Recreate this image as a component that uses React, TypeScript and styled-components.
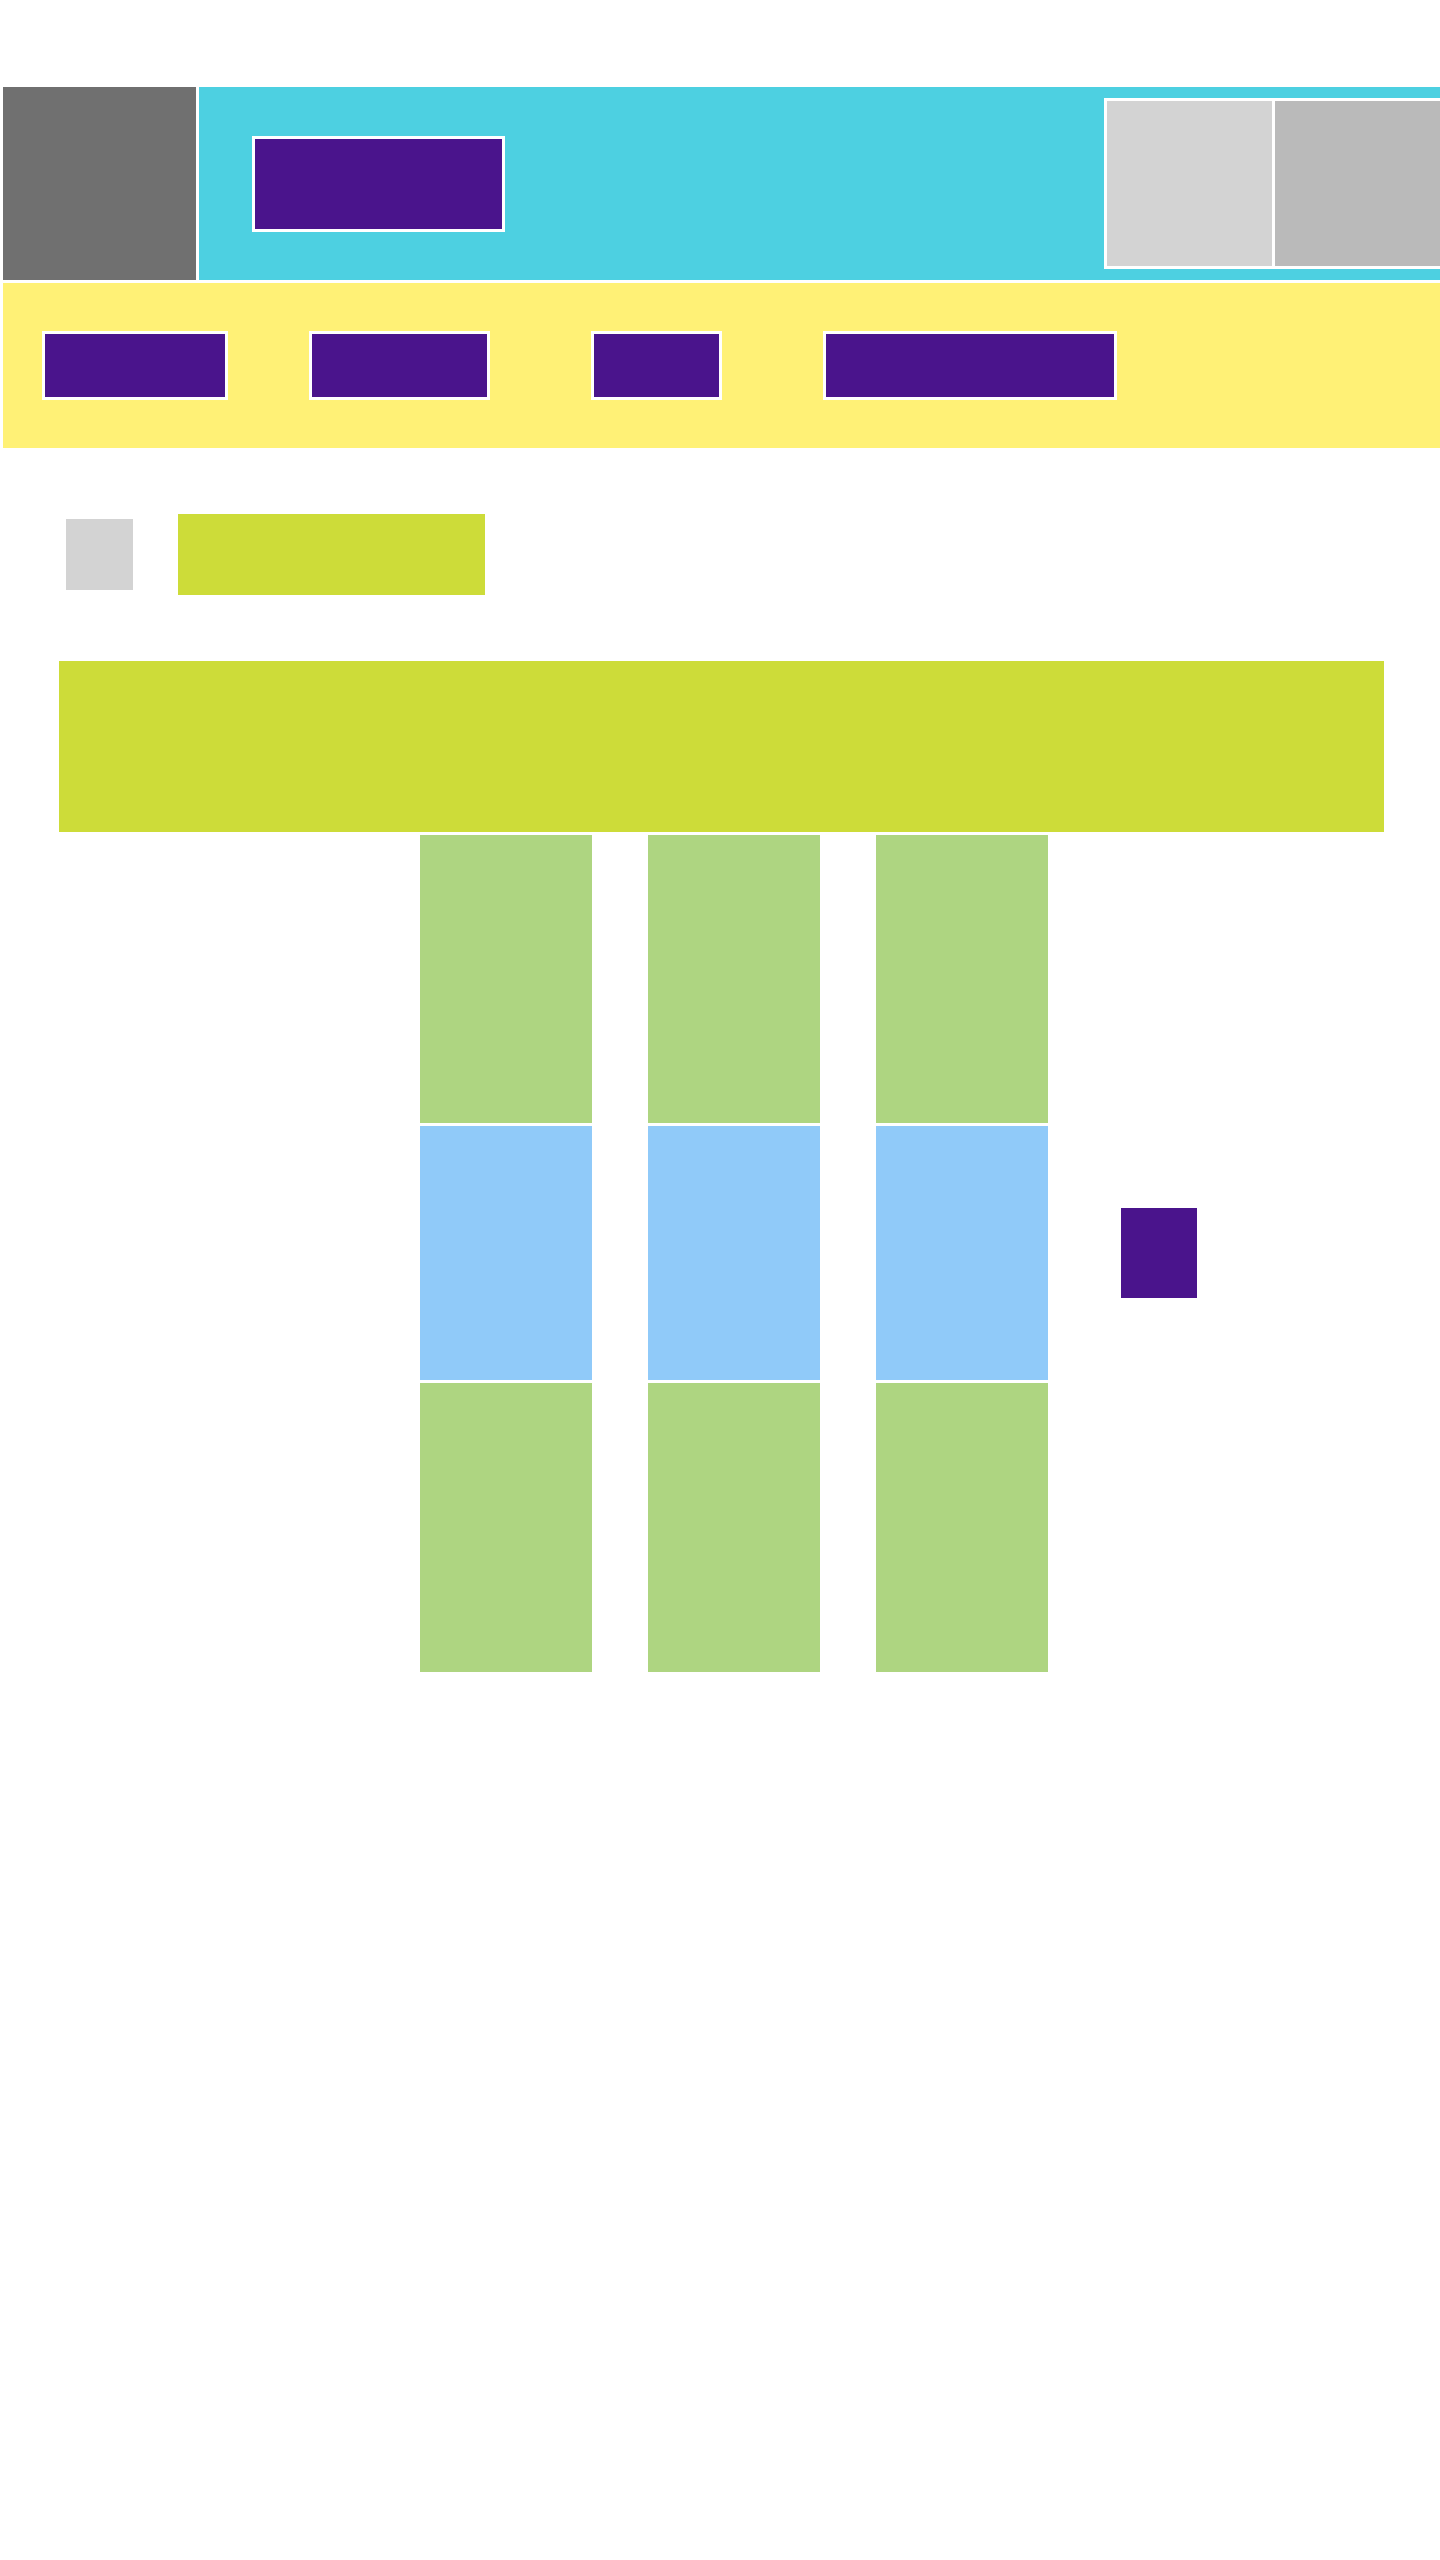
import React from "react";
import styled, { createGlobalStyle } from "styled-components";

const Global = createGlobalStyle`
  html, body {
    margin: 0;
    padding: 0;
    background: #ffffff;
    overflow-x: hidden;
    font-family: "Liberation Sans", Arial, sans-serif;
  }
  *, *::before, *::after { box-sizing: border-box; }
`;

const Page = styled.div`
  width: 1440px;
  margin-left: 3px;
  padding-top: 87px;
  min-height: 2560px;
  display: flex;
  flex-direction: column;
`;

const Header = styled.header`
  display: flex;
  gap: 3px;
  height: 193px;
`;

const Logo = styled.div`
  width: 193px;
  flex: none;
  background: #707070;
`;

const HeaderBar = styled.div`
  flex: 1;
  background: #4dd0e1;
  display: flex;
  align-items: center;
  justify-content: space-between;
  padding-left: 53px;
`;

const PurpleButton = styled.div<{ $w: number; $h: number }>`
  width: ${(p) => p.$w}px;
  height: ${(p) => p.$h}px;
  flex: none;
  background: #4a148c;
  border: 3px solid #ffffff;
`;

const ThumbGroup = styled.div`
  display: flex;
  gap: 3px;
  padding: 3px;
  background: #ffffff;
`;

const Thumb = styled.div<{ $c: string }>`
  width: 165px;
  height: 165px;
  background: ${(p) => p.$c};
`;

const Nav = styled.nav`
  margin-top: 3px;
  height: 165px;
  background: #fff176;
  display: flex;
  align-items: center;
  padding-left: 39px;
`;

const NavItem = styled(PurpleButton)<{ $mr: number }>`
  margin-right: ${(p) => p.$mr}px;
`;

const TitleRow = styled.div`
  margin-top: 66px;
  margin-left: 63px;
  display: flex;
  align-items: center;
  gap: 45px;
`;

const Avatar = styled.div`
  width: 67px;
  height: 71px;
  background: #d3d3d3;
`;

const Title = styled.div`
  width: 307px;
  height: 81px;
  background: #cddc39;
`;

const Banner = styled.div`
  margin-top: 66px;
  margin-left: 56px;
  width: 1325px;
  height: 171px;
  background: #cddc39;
`;

const Grid = styled.div`
  margin-top: 3px;
  margin-left: 417px;
  display: grid;
  grid-template-columns: 172px 172px 172px auto;
  grid-template-rows: 288px 254px 289px;
  column-gap: 56px;
  row-gap: 3px;
  justify-content: start;
`;

const Cell = styled.div<{ $c: string }>`
  background: ${(p) => p.$c};
`;

const SideAction = styled.div`
  grid-column: 4;
  grid-row: 2;
  align-self: center;
  margin-left: 17px;
  width: 76px;
  height: 90px;
  background: #4a148c;
`;

const GREEN = "#aed581";
const BLUE = "#90caf9";

const navItems = [
  { w: 186, mr: 81 },
  { w: 181, mr: 101 },
  { w: 131, mr: 101 },
  { w: 294, mr: 0 },
];

const rows = [GREEN, BLUE, GREEN];

export default function App() {
  return (
    <>
      <Global />
      <Page>
        <Header>
          <Logo />
          <HeaderBar>
            <PurpleButton $w={253} $h={96} />
            <ThumbGroup>
              <Thumb $c="#d3d3d3" />
              <Thumb $c="#bababa" />
            </ThumbGroup>
          </HeaderBar>
        </Header>
        <Nav>
          {navItems.map((n, i) => (
            <NavItem key={i} $w={n.w} $h={69} $mr={n.mr} />
          ))}
        </Nav>
        <TitleRow>
          <Avatar />
          <Title />
        </TitleRow>
        <Banner />
        <Grid>
          {rows.map((c, r) =>
            [0, 1, 2].map((col) => (
              <Cell
                key={`${r}-${col}`}
                $c={c}
                style={{ gridRow: r + 1, gridColumn: col + 1 }}
              />
            ))
          )}
          <SideAction />
        </Grid>
      </Page>
    </>
  );
}
